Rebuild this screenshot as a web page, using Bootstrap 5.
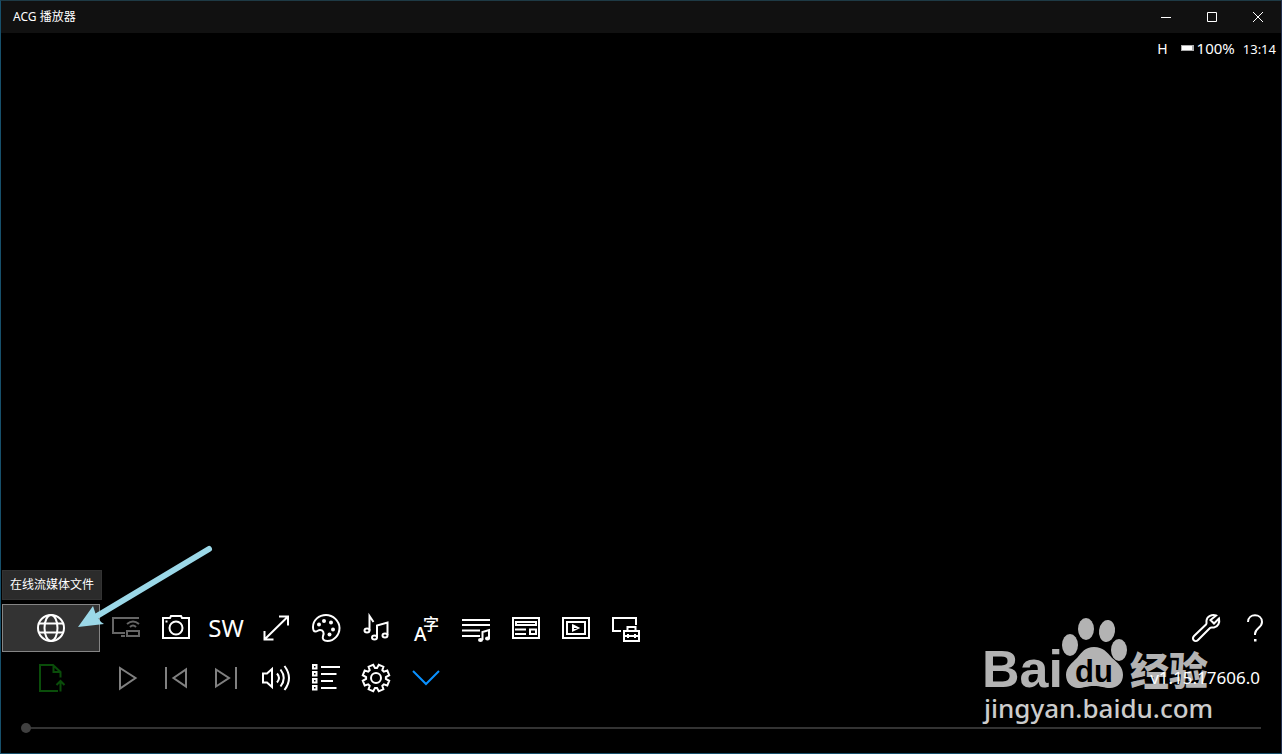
<!DOCTYPE html>
<html lang="zh-CN">
<head>
<meta charset="utf-8">
<meta name="viewport" content="width=device-width, initial-scale=1">
<title>ACG 播放器</title>
<link href="https://cdn.jsdelivr.net/npm/bootstrap@5.3.0/dist/css/bootstrap.min.css" rel="stylesheet">
<style>
body { background: #000; color: #fff; font-family: "Noto Sans", "Noto Sans CJK SC", sans-serif; }
.player { border: 1px solid #17506b; border-top-color: #1e3a45; border-right-color: #22304f; }
.titlebar { background: #111; height: 32px; font-size: 12px; }
.win-btn { width: 46px; height: 32px; }
.win-btn svg { stroke-width: 1; }
.flat { background: none; border: 0; padding: 0; color: #fff; display: flex; align-items: center; justify-content: center; }
.flat:disabled { color: #808080; }
.tool { width: 50px; height: 50px; }
.tool-wide { width: 98px; height: 48px; margin: 0 1px; }
.tool-active { background: #333; border: 1px solid #858585; }
.tool-cast:disabled { color: #666; }
.tool-open { color: #0a4d0a; }
.tool-more { color: #0a91ff; }
.tool-text { font-size: 24px; line-height: 32px; }
svg { display: block; flex: none; fill: none; stroke: currentColor; stroke-width: 2; overflow: visible; }
svg text, .solid { fill: currentColor; stroke: none; }
.status { height: 32px; font-size: 13px; line-height: 20px; padding: 0 5px 2px 0; }
.status-h { font-size: 14px; margin-right: 13px; }
.status-power { font-size: 15px; margin-right: 8px; }
.battery { width: 13px; height: 6px; background: #fff; border: 1px solid #aaa; border-right-width: 2px; margin-right: 3px; align-self: center; }
.tip { background: #2b2b2b; border: 1px solid #333; font-size: 12px; line-height: 18px; padding: 5px 7px; margin: 0 0 3px 1px; }
.version { font-size: 17px; z-index: 3; margin-right: 21px; }
.seek { height: 50px; }
.seek input { appearance: none; -webkit-appearance: none; background: none; height: 10px; margin: 0 20px; }
.seek input::-webkit-slider-runnable-track { height: 2px; background: linear-gradient(#333, #333) 5px 0 no-repeat; }
.seek input::-webkit-slider-thumb { -webkit-appearance: none; width: 10px; height: 10px; margin-top: -4px; border-radius: 50%; background: #404040; }
.pointer { left: 74px; bottom: 123px; z-index: 4; color: #9bd8e8; pointer-events: none; }
.pointer .shaft { stroke-width: 6; stroke-linecap: round; }
.brand-mark { right: 65px; bottom: 25px; z-index: 2; color: #b3b3b3; pointer-events: none; }
.brand-mark .brand-du { fill: #000; }
.brand-mark .brand-url { fill: #ccc; }
</style>
</head>
<body>
<main class="player position-relative d-flex flex-column min-vh-100">
  <header class="titlebar d-flex align-items-center">
    <span class="me-auto ps-2 ms-1">ACG 播放器</span>
    <button class="flat win-btn" aria-label="最小化"><svg width="12" height="12"><path d="M1 6.500h10"/></svg></button>
    <button class="flat win-btn" aria-label="最大化"><svg width="12" height="12"><path d="M1.500 1.500h9v9h-9z"/></svg></button>
    <button class="flat win-btn" aria-label="关闭"><svg width="12" height="12"><path d="M1 1l10 10M11 1L1 11"/></svg></button>
  </header>

  <div class="status d-flex align-items-center justify-content-end">
    <div class="d-flex align-items-baseline">
      <span class="status-h">H</span>
      <span class="battery"></span>
      <span class="status-power">100%</span>
      <time>13:14</time>
    </div>
  </div>

  <section class="flex-grow-1 d-flex align-items-end" aria-label="视频">
    <div class="tip" role="tooltip" id="tip-online">在线流媒体文件</div>
  </section>

  <footer>
    <div class="d-flex align-items-center">
      <button class="flat tool-wide tool-active" aria-label="在线流媒体文件" aria-describedby="tip-online"><svg width="32" height="32"><circle cx="16" cy="16" r="13"/><ellipse cx="16" cy="16" rx="6.500" ry="13"/><path d="M4 11.500h24M4 20.500h24"/></svg></button>
      <button class="flat tool tool-cast" disabled aria-label="投屏"><svg width="32" height="32"><path d="M29 6H3v15h12M11 24h4M17 19h12v5H17zM17 12q6-5 12 0M20 15q3-3 6 0"/></svg></button>
      <button class="flat tool" aria-label="截图"><svg width="32" height="32"><path d="M3 6h7l1-2h10l1 2h7v20H3z"/><circle cx="16" cy="16" r="6.500"/><path class="solid" d="M5.500 8.500h2v2h-2z"/></svg></button>
      <button class="flat tool tool-text">SW</button>
      <button class="flat tool" aria-label="缩放"><svg width="32" height="32"><path d="M4.500 27.500L28 4.500M19 4.500h9v9M4.500 19v8.500h9"/></svg></button>
      <button class="flat tool" aria-label="色彩"><svg width="32" height="32"><path d="M3 15C3 8 9 3 16 3s13.500 6 13.500 13S24 29 17.500 29c-4 0-5.500-2-4.500-5 1.500-3.500 0-6-3-6-2 0-2.500 1.500-4.500 1.500C3.500 19.500 3 17 3 15z"/><g class="solid"><circle cx="14" cy="9" r="2"/><circle cx="9" cy="12.500" r="2"/><circle cx="21" cy="10.500" r="2"/><circle cx="23" cy="17.500" r="2"/><circle cx="19.500" cy="22.500" r="2"/></g></svg></button>
      <button class="flat tool" aria-label="音轨"><svg width="32" height="32"><ellipse cx="7" cy="18.500" rx="2.500" ry="2"/><path d="M9.500 18.500V4l4 6M17 25.500V13.500l10.500-3V23"/><ellipse cx="14.500" cy="25.500" rx="2.500" ry="2"/><ellipse cx="25" cy="23.500" rx="2.500" ry="2"/></svg></button>
      <button class="flat tool" aria-label="字幕"><svg width="32" height="32"><text x="4" y="29" font-size="19" font-weight="500">A</text><text x="13" y="18" font-size="16" font-family="Noto Sans CJK SC" font-weight="500">字</text></svg></button>
      <button class="flat tool" aria-label="播放列表"><svg width="32" height="32"><path d="M2 8h28M2 13h28M2 18.500h18M2 24h18M22.500 28v-8l6.500-2v9"/><g class="solid"><ellipse cx="20.500" cy="28" rx="2.500" ry="2"/><ellipse cx="27.500" cy="26.500" rx="2.500" ry="2"/></g></svg></button>
      <button class="flat tool" aria-label="信息"><svg width="32" height="32"><path d="M3 6h26v20H3zM6 10h20v3H6zM5 17.500h11M5 22h11M20 17.500h6V22h-6z"/></svg></button>
      <button class="flat tool" aria-label="视频窗口"><svg width="32" height="32"><path d="M3 6h26v20H3zM7 10h18v12H7zM13 13.500l5 2.500-5 2.500z"/></svg></button>
      <button class="flat tool me-auto" aria-label="设备工具"><svg width="32" height="32"><path d="M11 19H3V6h23v7M14 19h15v10H14zM17.500 19v-4h8v4M14 24h15M18 22v4M25 22v4"/></svg></button>
      <button class="flat tool" aria-label="工具"><svg width="32" height="32"><path d="M26 3.500c-4-1.500-9 1-9.500 5-.2 2 .5 3-.5 4L4 24c-3 3 1 7 4 4l12-12c1-1 2-.3 4-.5 4-.5 6-5 5-9l-5 5-3.500-3.500z"/></svg></button>
      <button class="flat tool" aria-label="帮助"><svg width="32" height="32"><path d="M8 10c0-9 14-9 14 0 0 6-7 6-7 12v1"/><path class="solid" d="M14 27h2.500v2.500H14z"/></svg></button>
    </div>

    <div class="d-flex align-items-center">
      <button class="flat tool-wide tool-open" aria-label="打开文件"><svg width="32" height="32"><path d="M23 29H5V3h13l7.500 7v5.500M18.500 3v7H26M25.500 29.500V19M21.500 23l4-4 4 4"/></svg></button>
      <button class="flat tool" disabled aria-label="播放"><svg width="32" height="32"><path d="M10 6v20.500L25.500 16z"/></svg></button>
      <button class="flat tool" disabled aria-label="上一个"><svg width="32" height="32"><path d="M6 5v22M26 7.500v17L13.500 16z"/></svg></button>
      <button class="flat tool" disabled aria-label="下一个"><svg width="32" height="32"><path d="M26 5v22M6 7.500v17L19 16z"/></svg></button>
      <button class="flat tool" aria-label="音量"><svg width="32" height="32"><path d="M3 11.500h4L12 7v18l-5-4.500H3zM17 11.500q4 4.500 0 9M20.500 7.500q6.500 8.500 0 17M24.500 4q9 12 0 24"/></svg></button>
      <button class="flat tool" aria-label="文件列表"><svg width="32" height="32"><path d="M3 3h3.500v3.500H3zM3 10h3.500v3.500H3zM3 17h3.500v3.500H3zM3 24h3.500v3.500H3zM11 5h19M11 12h15.500M11 19h12M11 26h15.500"/></svg></button>
      <button class="flat tool" aria-label="设置"><svg width="32" height="32"><path id="gear" d=""/><circle cx="16" cy="16" r="5"/></svg></button>
      <button class="flat tool tool-more me-auto" aria-label="更多"><svg width="32" height="32"><path d="M3 9l13 13L29 9"/></svg></button>
      <span class="version">v1.15.17606.0</span>
    </div>

    <div class="seek d-flex align-items-center">
      <input class="flex-grow-1" type="range" min="0" max="100" value="0" aria-label="播放进度">
    </div>
  </footer>

  <svg class="pointer position-absolute" width="142" height="92" aria-hidden="true"><path class="shaft" d="M22 78L134 11"/><path class="solid" d="M3 89L18 68l3 9 5 7 3 2z"/></svg>

  <svg class="brand-mark position-absolute" width="234" height="116" role="img" aria-label="Baidu 经验">
    <text x="0" y="75" font-family="Liberation Sans" font-weight="700" font-size="52">Bai</text>
    <g class="solid"><ellipse cx="88" cy="33" rx="8" ry="11"/><ellipse cx="104" cy="17" rx="8" ry="11"/><ellipse cx="125" cy="19" rx="8" ry="11" transform="rotate(8 125 19)"/><ellipse cx="137" cy="38" rx="8" ry="11"/>
    <path d="M112 35c-9 0-12 5-17 11-5 5-11 9-11 17s6 13 12 13c6 0 9-2 16-2s10 2 16 2c7 0 13-5 13-13s-5-12-11-17c-5-6-9-11-18-11z"/></g>
    <text class="brand-du" x="93" y="70" font-family="Liberation Sans" font-weight="700" font-size="31">du</text>
    <text x="148" y="73" font-family="Noto Sans CJK SC" font-weight="900" font-size="39">经验</text>
    <text class="brand-url" x="2" y="106" font-family="Noto Sans" font-weight="500" font-size="26">jingyan.baidu.com</text>
  </svg>
</main>
<script>
  // Eight-toothed outline of the settings gear
  let d = "";
  for (let k = 0; k < 8; k++) {
    [[6, 10], [12, 13.500], [33, 13.500], [39, 10]].forEach(([deg, r]) => {
      const a = (k * 45 + deg) * Math.PI / 180;
      d += (d ? "L" : "M") + (16 + r * Math.sin(a)).toFixed(1) + " " + (16 - r * Math.cos(a)).toFixed(1);
    });
  }
  document.getElementById("gear").setAttribute("d", d + "z");
</script>
<script src="https://cdn.jsdelivr.net/npm/bootstrap@5.3.0/dist/js/bootstrap.bundle.min.js"></script>
</body>
</html>
